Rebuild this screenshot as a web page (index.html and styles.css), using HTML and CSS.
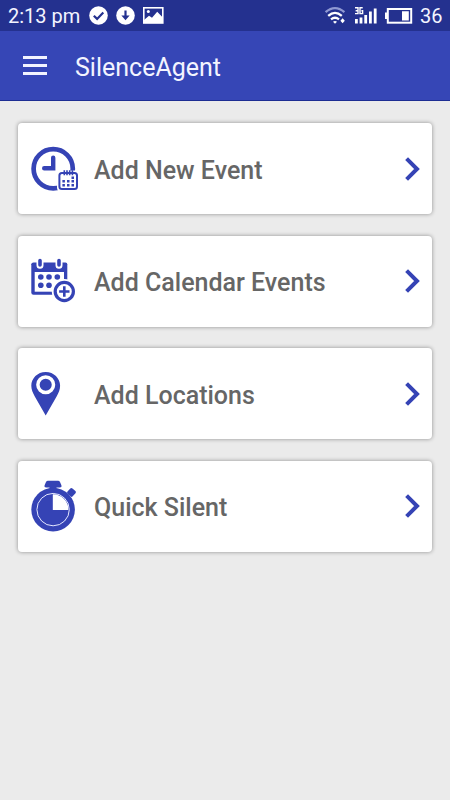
FILE: index.html
```html
<!DOCTYPE html>
<html lang="en">

<head>
    <meta charset="UTF-8">
    <meta name="viewport" content="width=device-width, initial-scale=1.0">
    <title>SilenceAgent</title>
    <link rel="stylesheet" href="styles.css">
</head>

<body>
    <div class="status">
        <span class="time">2:13 pm</span>
        <svg class="check" width="19" height="19" viewBox="0 0 19 19">
            <circle cx="9.5" cy="9.5" r="9.3" fill="#fff"/>
            <path d="M4.8 9.7l3.3 3.2 6.2-6.4" fill="none" stroke="#24318f" stroke-width="2.2"/>
        </svg>
        <svg class="download" width="19" height="19" viewBox="0 0 19 19">
            <circle cx="9.5" cy="9.5" r="9.3" fill="#fff"/>
            <path d="M9.5 4.5v7" stroke="#24318f" stroke-width="2.2"/>
            <path d="M5.4 9.4h8.200l-4.100 4.800z" fill="#24318f"/>
        </svg>
        <svg class="picture" width="21" height="17" viewBox="0 0 21 17">
            <rect x="0.8" y="0.8" width="19" height="15.2" fill="none" stroke="#fff" stroke-width="1.6"/>
            <path d="M1 13l5-4.2 3 2 5.2-6 5.6 5.8v5.4H1z" fill="#fff"/>
            <circle cx="5.3" cy="4.6" r="1.5" fill="#fff"/>
        </svg>

        <svg class="wifi" width="20" height="17" viewBox="0 0 20 17">
            <g fill="none" stroke="#fff" stroke-width="2.3">
                <path d="M0.6 5.2Q10-3 19.4 5.2" stroke="#8f98d2"/>
                <path d="M3.2 8.8q6.8-5.8 13.6 0"/>
                <path d="M6 12.3q4-3.2 8 0"/>
            </g>
            <path d="M8 14.700q2-1.400 4 0l-2 2zM17.600 11.200l2.200 2.500-2.200 2.500-2.200-2.500z" fill="#fff"/>
        </svg>
        <svg class="signal" width="22" height="17" viewBox="0 0 22 17">
            <path d="M0 12h2.8v4.5H0zM4.600 10.500h2.800v6H4.600zM9.300 8h2.800v8.500H9.300zM14 4.500h2.800v12H14zM18.800 1.500h2.800v15h-2.800z" fill="#fff"/>
            <path d="M0 .8h3v5.800H0M.6 3.700H3M7.700 .8H5v5.800h2.600V3.800H6.400" fill="none" stroke="#fff" stroke-width="1.4"/>
        </svg>
        <svg class="battery" width="28" height="16" viewBox="0 0 28 16">
            <rect x="2.800" y="1" width="23.400" height="13.700" fill="none" stroke="#fff" stroke-width="2"/>
            <path d="M0 4.500h2.200v6.500H0zM17 3.200h6.800v9.200H17z" fill="#fff"/>
        </svg>
        <span class="percent">36</span>
    </div>

    <header class="toolbar">
        <div class="menu">
            <span></span>
            <span></span>
            <span></span>
        </div>
        <h1>SilenceAgent</h1>
    </header>

    <main class="cards">
        <div class="card">
            <svg class="icon" viewBox="0 0 48 48">
                <circle cx="23.2" cy="23.7" r="19.6" fill="none" stroke="#3543b5" stroke-width="4.7"/>
                <path d="M23.2 12.7v10.5h-9" fill="none" stroke="#3543b5" stroke-width="4.4" stroke-linecap="round"/>
                <rect x="27" y="25.5" width="22" height="21" rx="4" fill="#fff"/>
                <rect x="29.4" y="28" width="17.600" height="16" rx="2.5" fill="#fff" stroke="#3543b5" stroke-width="2"/>
                <path d="M34.300 25.200v5M37 25.200v5M39.700 25.200v5M42.400 25.200v5" stroke="#3543b5" stroke-width="1.6"/>
                <g fill="#3543b5">
                    <path d="M41.500 31.600h2.500v2.500h-2.500zM32.400 35h2.500v2.500h-2.500zM37 35h2.500v2.500H37zM41.500 35h2.500v2.500h-2.500z"/>
                    <path d="M32.400 39h2.500v2.500h-2.500zM37 39h2.500v2.500H37zM41.500 39h2.500v2.500h-2.500z"/>
                </g>
            </svg>
            <span class="label">Add New Event</span>
            <svg class="arrow" viewBox="0 0 14 26"><path d="M1.600 2.600L12 13 1.600 23.400"/></svg>
        </div>

        <div class="card">
            <svg class="icon" viewBox="0 0 48 48">
                <path d="M3.500 5.500h32q1.800 0 1.800 1.800v29q0 1.500-1.800 1.500h-32q-2.200 0-2.200-2.200V7.300q0-1.800 2.200-1.800z" fill="#3543b5"/>
                <path d="M4.700 15h29.300v19.700H4.700z" fill="#fff"/>
                <path d="M10 3.700v4.500M29 3.700v4.500" stroke="#fff" stroke-width="7" stroke-linecap="round"/>
                <path d="M10 3.500v4.500M29 3.500v4.500" stroke="#3543b5" stroke-width="3.600" stroke-linecap="round"/>
                <g fill="#3543b5">
                    <circle cx="10.800" cy="20" r="2.800"/>
                    <circle cx="19" cy="20" r="2.800"/>
                    <circle cx="27.300" cy="20" r="2.800"/>
                    <circle cx="10.800" cy="28.200" r="2.800"/>
                    <circle cx="19" cy="28.200" r="2.800"/>
                </g>
                <circle cx="34.300" cy="34.500" r="12.500" fill="#fff"/>
                <circle cx="34.300" cy="34.500" r="9.100" fill="#fff" stroke="#3543b5" stroke-width="3.200"/>
                <path d="M34.300 29.300v10.400M29.100 34.500h10.400" stroke="#3543b5" stroke-width="2.600"/>
            </svg>
            <span class="label">Add Calendar Events</span>
            <svg class="arrow" viewBox="0 0 14 26"><path d="M1.600 2.600L12 13 1.600 23.400"/></svg>
        </div>

        <div class="card">
            <svg class="icon" viewBox="0 0 48 48">
                <path d="M15.700 2C7.500 2 1.300 8.300 1.300 15.800c0 4 1.500 7 3.500 10.700L15.700 45.500l10.900-19c2-3.700 3.500-6.700 3.500-10.700C30.100 8.300 23.900 2 15.700 2z" fill="#3543b5"/>
                <circle cx="15.700" cy="14.700" r="7.800" fill="#3543b5" stroke="#fff" stroke-width="3.500"/>
            </svg>
            <span class="label">Add Locations</span>
            <svg class="arrow" viewBox="0 0 14 26"><path d="M1.600 2.600L12 13 1.600 23.400"/></svg>
        </div>

        <div class="card">
            <svg class="icon" viewBox="0 0 48 48">
                <g fill="#3543b5">
                    <path d="M18-1.200h10q1.400 0 2 1.200l1.400 3.300q.6 2.200-1.600 2.200h-3.300V8h-7V5.500h-3.300q-2.200 0-1.600-2.200L16 0q.6-1.200 2-1.200z"/>
                    <circle cx="23.100" cy="27.600" r="21.800"/>
                    <rect x="38" y="6.800" width="7" height="7.200" rx="1.500" transform="rotate(42 41.500 10.400)"/>
                </g>
                <circle cx="23.100" cy="27.600" r="16.200" fill="none" stroke="#e4e7ff" stroke-width="1"/>
                <path d="M22.800 27.900V12.200A15.500 15.500 0 0 1 38.400 27.900z" fill="#fff"/>
            </svg>
            <span class="label">Quick Silent</span>
            <svg class="arrow" viewBox="0 0 14 26"><path d="M1.600 2.600L12 13 1.600 23.400"/></svg>
        </div>
    </main>
</body>

</html>
```
FILE: styles.css
```css
* {
    margin: 0;
    padding: 0;
    box-sizing: border-box;
}

body {
    height: 800px;
    background-color: #ebebeb;
    font-family: Roboto, sans-serif;
    overflow: hidden;
}

svg {
    flex-shrink: 0;
    overflow: visible;
}

/* status bar */
.status {
    display: flex;
    align-items: center;
    height: 31px;
    padding: 0 7px 0 8px;
    background-color: #24318f;
    color: #f3f4ff;
    font-size: 20px;
}

.time {
    width: 81px;
    white-space: nowrap;
}

.download {
    margin-left: 8px;
}

.picture {
    margin-left: 8px;
}

.wifi {
    margin-left: auto;
}

.signal {
    margin-left: 10px;
}

.battery {
    margin-left: 8px;
}

.percent {
    width: 23px;
    margin-left: 7px;
}

/* app bar */
.toolbar {
    display: flex;
    align-items: center;
    height: 70px;
    padding-left: 23px;
    background-color: #3646b6;
    border-bottom: 1px solid #1d2d93;
}

.menu {
    display: flex;
    flex-direction: column;
    gap: 5px;
    width: 24px;
}

.menu span {
    height: 3px;
    background-color: #f3f4ff;
}

.toolbar h1 {
    margin: 4px 0 0 28px;
    color: #f3f4ff;
    font-size: 25px;
    font-weight: 400;
}

/* main options */
.cards {
    display: flex;
    flex-direction: column;
    gap: 21.5px;
    padding: 22px 18px;
}

.card {
    display: flex;
    align-items: center;
    height: 91px;
    padding: 0 13px 0 12px;
    background-color: #fff;
    border-radius: 4px;
    box-shadow: 0 0 4px rgba(0, 0, 0, 0.4);
}

.icon {
    width: 48px;
    height: 48px;
}

.label {
    flex: 1;
    margin: 3px 0 0 16px;
    color: #666;
    font-size: 25px;
    font-weight: 500;
}

.arrow {
    width: 14px;
    height: 26px;
}

.arrow path {
    fill: none;
    stroke: #3543b5;
    stroke-width: 4;
}
```
